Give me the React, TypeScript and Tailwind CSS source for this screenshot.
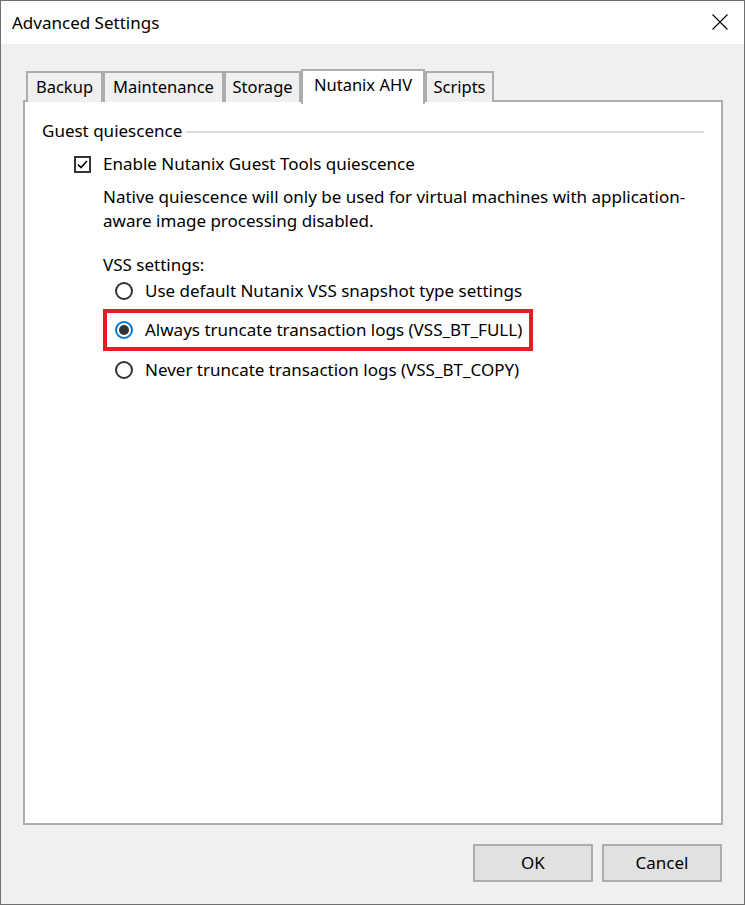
import React from "react";

const font = { fontFamily: '"Noto Sans", "Open Sans", sans-serif' };

function Tab({ label, w, active }: { label: string; w: string; active?: boolean }) {
  if (active) {
    return (
      <div
        className={`${w} h-[35px] -mb-[2px] relative z-10 bg-white border-2 border-b-0 border-[#adadad] flex items-center justify-center text-[16.5px] text-black`}
      >
        <span className="-mt-[4px]">{label}</span>
      </div>
    );
  }
  return (
    <div
      className={`${w} h-[31px] bg-[#f0f0f0] border-2 border-b-0 border-[#adadad] flex items-center justify-center text-[16.5px] text-black`}
    >
      <span className="mt-[0px]">{label}</span>
    </div>
  );
}

function Radio({ checked }: { checked?: boolean }) {
  return (
    <span
      className={`w-[18px] h-[18px] rounded-full border-2 ${checked ? "border-[#0078d7]" : "border-[#333333]"} bg-white flex items-center justify-center shrink-0`}
    >
      {checked && <span className="w-[10px] h-[10px] rounded-full bg-[#333333]" />}
    </span>
  );
}

export default function App() {
  return (
    <div className="w-[745px] h-[905px] border border-[#6f6f6f] bg-[#f0f0f0] flex flex-col text-black" style={font}>
      <div className="h-[43px] bg-white flex items-center justify-between pl-[11px] pr-[16px] shrink-0">
        <span className="text-[17px] mt-[0px]">Advanced Settings</span>
        <svg width="16" height="16" viewBox="0 0 16 16" className="-mt-[1px]">
          <path d="M0.5 0.5 L15.5 15.5 M15.5 0.5 L0.5 15.5" stroke="#000" strokeWidth="1.1" fill="none" />
        </svg>
      </div>
      <div className="flex-1 flex flex-col pt-[23px] pl-[22px] pr-[21px] pb-[22px]">
        <div className="flex items-end pl-[3px] h-[35px] -mb-[2px] relative z-10">
          <Tab label="Backup" w="w-[77px]" />
          <Tab label="Maintenance" w="w-[121px]" />
          <Tab label="Storage" w="w-[77px]" />
          <Tab label="Nutanix AHV" w="w-[124px]" active />
          <Tab label="Scripts" w="w-[69px]" />
        </div>
        <div className="flex-1 bg-white border-2 border-[#adadad] flex flex-col text-[17px]">
          <div className="mt-[18px] h-[22px] flex items-center pl-[17px] pr-[17px]">
            <span className="leading-[22px]">Guest quiescence</span>
            <div className="flex-1 h-[2px] bg-[#dcdcdc] ml-[4px] mt-[1px]" />
          </div>
          <div className="mt-[10px] h-[24px] flex items-center pl-[49px]">
            <span className="w-[17px] h-[17px] border-2 border-[#333333] bg-white flex items-center justify-center shrink-0 mt-[1px]">
              <svg width="11" height="9" viewBox="0 0 11 9">
                <path d="M1 4.5 L4 7.5 L10 1" stroke="#000" strokeWidth="1.6" fill="none" />
              </svg>
            </span>
            <span className="ml-[12px] leading-[24px]">Enable Nutanix Guest Tools quiescence</span>
          </div>
          <div className="mt-[9px] pl-[78px] pr-[20px] leading-[24px]">
            Native quiescence will only be used for virtual machines with application-
            <br />
            aware image processing disabled.
          </div>
          <div className="mt-[20px] pl-[78px] leading-[24px]">VSS settings:</div>
          <div className="mt-[2px] h-[24px] flex items-center pl-[90px]">
            <Radio />
            <span className="ml-[12px] leading-[24px]">Use default Nutanix VSS snapshot type settings</span>
          </div>
          <div className="mt-[6px] ml-[78px] w-[430px] h-[42px] border-4 border-[#e81b24] flex items-center pl-[8px]">
            <Radio checked />
            <span className="ml-[12px] leading-[24px] whitespace-nowrap">Always truncate transaction logs (VSS_BT_FULL)</span>
          </div>
          <div className="mt-[7px] h-[24px] flex items-center pl-[90px]">
            <Radio />
            <span className="ml-[12px] leading-[24px]">Never truncate transaction logs (VSS_BT_COPY)</span>
          </div>
        </div>
        <div className="mt-[19px] h-[38px] flex justify-end gap-[9px] pr-[1px] shrink-0">
          <button className="w-[120px] h-[38px] bg-[#e1e1e1] border-2 border-[#adadad] text-[17px]">OK</button>
          <button className="w-[120px] h-[38px] bg-[#e1e1e1] border-2 border-[#adadad] text-[17px]">Cancel</button>
        </div>
      </div>
    </div>
  );
}
